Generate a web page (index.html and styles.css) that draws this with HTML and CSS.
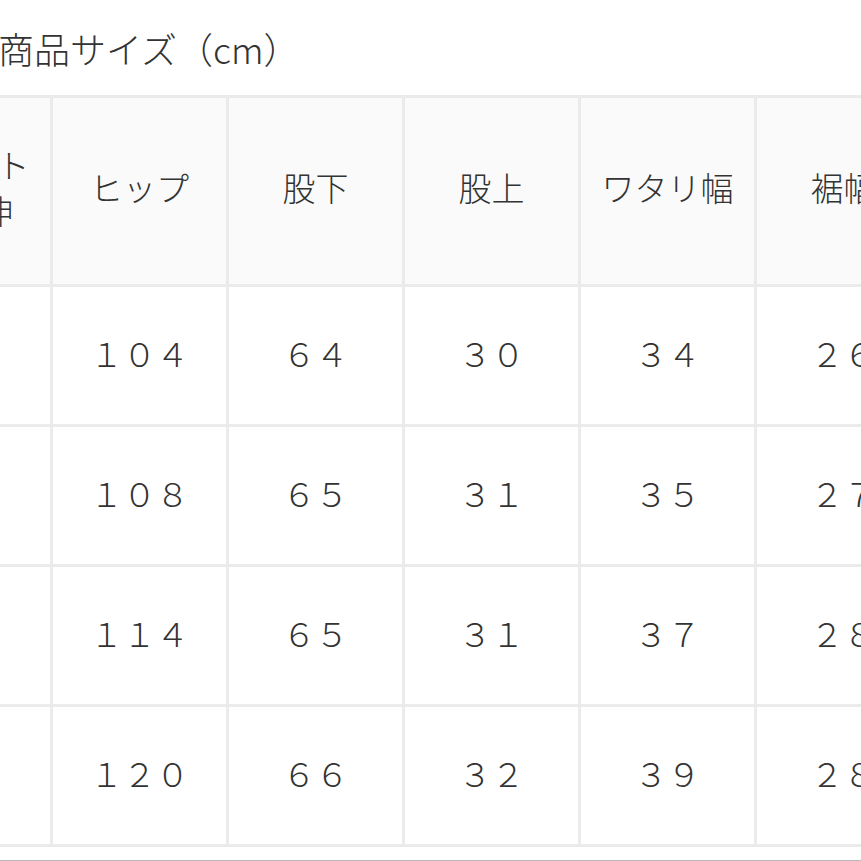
FILE: index.html
```html
<!DOCTYPE html>
<html lang="ja">
<head>
<meta charset="utf-8">
<title>商品サイズ</title>
<link rel="stylesheet" href="styles.css">
</head>
<body>
<div class="page">
  <div class="title">商品サイズ（cm）</div>
  <table class="size-table">
    <colgroup>
      <col class="c"><col class="c"><col class="c"><col class="c"><col class="c"><col class="c">
    </colgroup>
    <thead>
      <tr>
        <th>ウエスト<br>最大伸</th>
        <th>ヒップ</th>
        <th>股下</th>
        <th>股上</th>
        <th>ワタリ幅</th>
        <th>裾幅</th>
      </tr>
    </thead>
    <tbody>
      <tr><td>６８</td><td>１０４</td><td>６４</td><td>３０</td><td>３４</td><td>２６</td></tr>
      <tr><td>７２</td><td>１０８</td><td>６５</td><td>３１</td><td>３５</td><td>２７</td></tr>
      <tr><td>７６</td><td>１１４</td><td>６５</td><td>３１</td><td>３７</td><td>２８</td></tr>
      <tr><td>８２</td><td>１２０</td><td>６６</td><td>３２</td><td>３９</td><td>２８</td></tr>
    </tbody>
  </table>
  <div class="divider"></div>
</div>
</body>
</html>
```

FILE: styles.css
```css
html, body {
  margin: 0;
  padding: 0;
  overflow: hidden;
  background: #ffffff;
}

body {
  width: 861px;
  height: 861px;
  font-family: "Noto Sans CJK JP", "Noto Sans", sans-serif;
  color: #333333;
}

.page {
  width: 861px;
  overflow: hidden;
}

.title {
  font-size: 36px;
  font-weight: 300;
  line-height: 42px;
  padding: 27px 0 26px 0;
  margin-left: -2px;
  white-space: nowrap;
}

.size-table {
  margin-left: -126px;
  border-collapse: separate;
  border-spacing: 3px;
  background: #ebebeb;
  table-layout: fixed;
  width: 1059px;
}

.size-table col.c {
  width: 173px;
}

.size-table th,
.size-table td {
  padding: 0;
  text-align: center;
  vertical-align: middle;
  font-size: 33px;
  font-weight: 300;
  color: #333333;
}

.size-table th {
  background: #fafafa;
  height: 178px;
  line-height: 46px;
  padding-bottom: 8px;
}

.size-table td {
  background: #ffffff;
  height: 131px;
  line-height: 40px;
  padding-bottom: 6px;
}

.divider {
  margin-top: 13px;
  border-top: 2px solid #b8b8b8;
}
```
